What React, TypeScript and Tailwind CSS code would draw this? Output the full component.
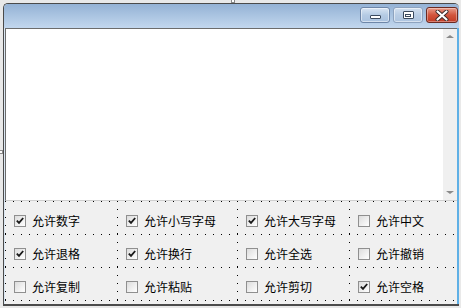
import React from "react";

const items: [string, boolean][] = [
  ["允许数字", true],
  ["允许小写字母", true],
  ["允许大写字母", true],
  ["允许中文", false],
  ["允许退格", true],
  ["允许换行", true],
  ["允许全选", false],
  ["允许撤销", false],
  ["允许复制", false],
  ["允许粘贴", false],
  ["允许剪切", false],
  ["允许空格", true],
];

function Box({ checked }: { checked: boolean }) {
  return (
    <span className="flex h-[12px] w-[12px] shrink-0 items-center justify-center border border-[#8f8f8f] bg-[linear-gradient(135deg,#dcdcdc,#ffffff)]">
      {checked && (
        <svg width="10" height="10" viewBox="0 0 10 10">
          <path d="M1.8 4.6 L4 6.9 L8.2 2" fill="none" stroke="#1a1a1a" strokeWidth="1.8" />
        </svg>
      )}
    </span>
  );
}

function Cell({ label, checked }: { label: string; checked: boolean }) {
  return (
    <div className="flex h-[33px] items-center gap-[6px] pl-[9px] pt-[6px] bg-[linear-gradient(to_right,#000_1px,transparent_1px),linear-gradient(to_bottom,#000_1px,transparent_1px)] bg-[length:8px_1px,1px_8px] [background-repeat:repeat-x,repeat-y] [background-position:0_0,0_0]">
      <Box checked={checked} />
      <span className="text-[12px] leading-none text-black">{label}</span>
    </div>
  );
}

export default function App() {
  return (
    <div className="relative h-[308px] w-[461px] overflow-hidden bg-[#e9e9e9] font-['Noto_Sans_CJK_SC','Liberation_Sans',sans-serif]">
      <span className="absolute left-[231px] top-0 h-[3px] w-[4px] border border-[#888] border-t-0 bg-white" />
      <span className="absolute left-0 top-[150px] h-[4px] w-[3px] border border-[#888] border-l-0 bg-white" />
      <div className="ml-[3px] mt-[3px] flex h-[303px] w-[456px] flex-col overflow-hidden rounded-t-[5px] border border-b-2 border-r-0 border-[#4b4b4b]">
        <div className="flex h-[24px] shrink-0 items-start justify-end gap-[3px] bg-[linear-gradient(to_bottom,#94b2d5,#c2d7ee)] pr-[1px] pt-[3px]">
          <div className="flex h-[16px] w-[30px] items-end justify-center rounded-[3px] border border-[#6e86a8] bg-[linear-gradient(to_bottom,#d9e5f3,#b5cbe4_50%,#a9c1de)] pb-[3px] shadow-[inset_0_0_0_1px_rgba(255,255,255,0.5)]">
            <span className="h-[4px] w-[11px] rounded-[1px] border border-[#3b4a5e] bg-white" />
          </div>
          <div className="flex h-[16px] w-[30px] items-center justify-center rounded-[3px] border border-[#8ea3bf] bg-[linear-gradient(to_bottom,#d4e1f0,#b9cde5_50%,#adc4df)] shadow-[inset_0_0_0_1px_rgba(255,255,255,0.5)]">
            <span className="flex h-[8px] w-[11px] items-center justify-center rounded-[1px] border border-[#3b4a5e] bg-white">
              <span className="h-[3px] w-[6px] border border-[#3b4a5e]" />
            </span>
          </div>
          <div className="flex h-[16px] w-[32px] items-center justify-center rounded-[3px] border border-[#6b2a22] bg-[linear-gradient(to_bottom,#e99c8a,#d2553d_50%,#c23b25)] shadow-[inset_0_0_0_1px_rgba(255,255,255,0.35)]">
            <svg width="14" height="11" viewBox="0 0 14 11">
              <path d="M2.5 1.5 L11.5 9.5 M11.5 1.5 L2.5 9.5" stroke="#3a2a2a" strokeWidth="4" strokeLinecap="round" />
              <path d="M2.5 1.5 L11.5 9.5 M11.5 1.5 L2.5 9.5" stroke="#ffffff" strokeWidth="2.2" strokeLinecap="round" />
            </svg>
          </div>
        </div>
        <div className="flex flex-1 flex-col border-r-2 border-[#5fb0e6] bg-[#dbe7f3] pl-px">
          <div className="flex h-[173px] shrink-0 border border-[#6c6c6c] border-b-[#cfcfcf] border-r-0 bg-white">
            <div className="flex-1" />
            <div className="flex w-[14px] flex-col items-center justify-between bg-[#f0f0f0] py-[6px]">
              <span className="h-0 w-0 border-x-[4px] border-b-[3px] border-x-transparent border-b-[#8a8a8a]" />
              <span className="h-0 w-0 border-x-[4px] border-t-[3px] border-x-transparent border-t-[#8a8a8a]" />
            </div>
          </div>
          <div className="flex flex-1 flex-col bg-[#f0f0f0]">
            <div className="grid grid-cols-[112px_120px_112px_1fr]">
              {items.map(([label, checked]) => (
                <Cell key={label} label={label} checked={checked} />
              ))}
            </div>
            <div className="h-px bg-[linear-gradient(to_right,#000_1px,transparent_1px)] bg-[length:8px_1px] bg-repeat-x" />
          </div>
        </div>
      </div>
    </div>
  );
}
